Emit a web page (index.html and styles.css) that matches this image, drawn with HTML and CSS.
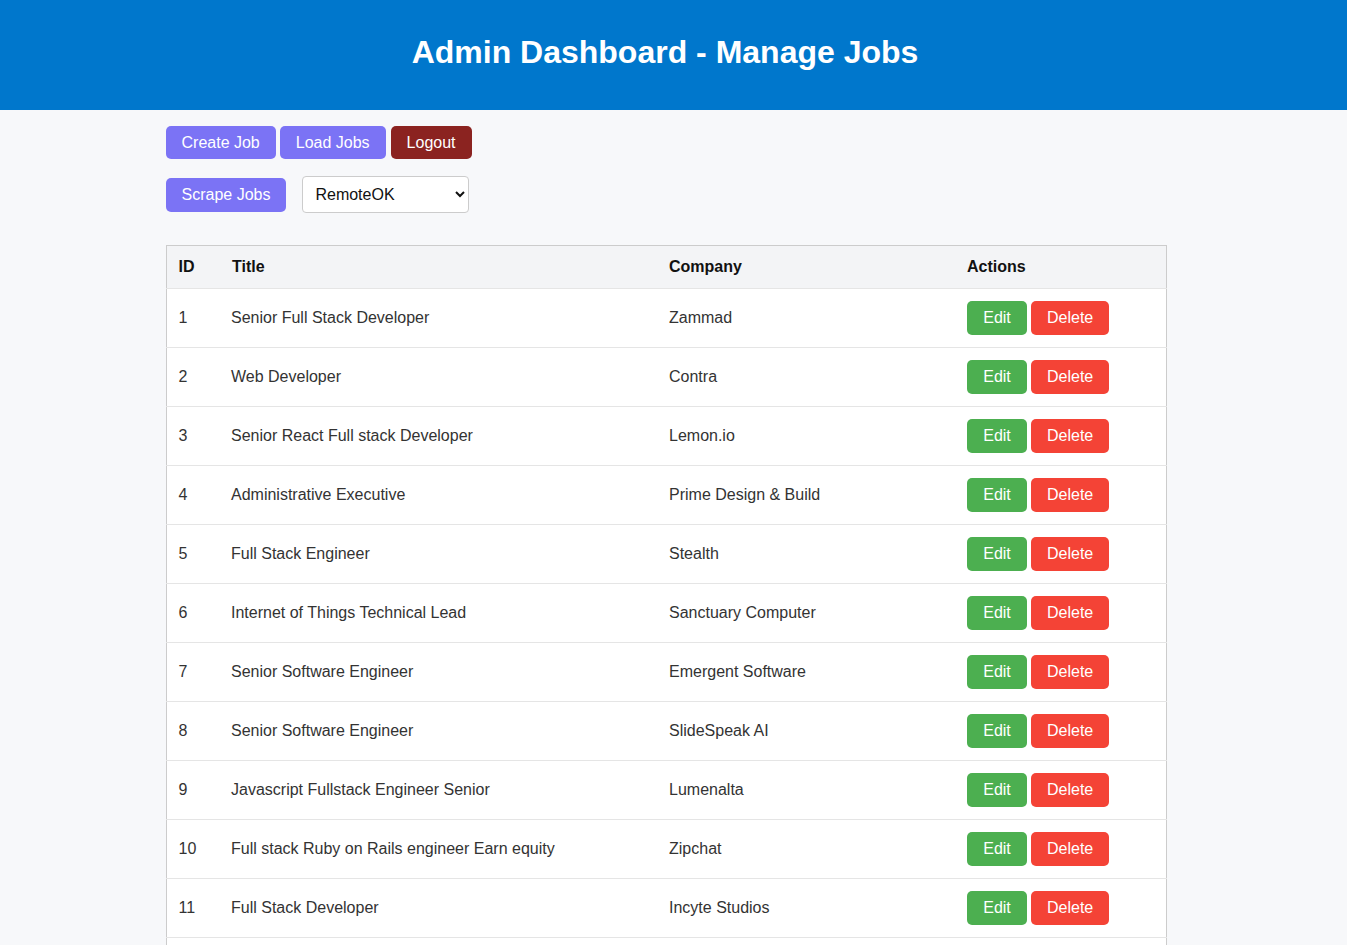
FILE: index.html
```html
<!DOCTYPE html>
<html>
<head>
<meta charset="utf-8">
<link rel="stylesheet" href="styles.css">
</head>
<body>
<header class="topbar"><h1 class="title">Admin Dashboard - Manage Jobs</h1></header>
<main class="container">
  <div class="toolbar">
    <button class="btn btn-purple">Create Job</button>
    <button class="btn btn-purple">Load Jobs</button>
    <button class="btn btn-logout">Logout</button>
  </div>
  <div class="scrape-row">
    <button class="btn btn-purple">Scrape Jobs</button>
    <select class="source">
      <option>RemoteOK</option>
    </select>
  </div>
  <table class="jobs">
    <colgroup>
      <col class="c-id"><col class="c-title"><col class="c-company"><col class="c-actions">
    </colgroup>
    <thead>
      <tr><th>ID</th><th>Title</th><th>Company</th><th>Actions</th></tr>
    </thead>
    <tbody>
      <tr><td>1</td><td>Senior Full Stack Developer</td><td>Zammad</td><td><button class="btn btn-edit">Edit</button><button class="btn btn-delete">Delete</button></td></tr>
      <tr><td>2</td><td>Web Developer</td><td>Contra</td><td><button class="btn btn-edit">Edit</button><button class="btn btn-delete">Delete</button></td></tr>
      <tr><td>3</td><td>Senior React Full stack Developer</td><td>Lemon.io</td><td><button class="btn btn-edit">Edit</button><button class="btn btn-delete">Delete</button></td></tr>
      <tr><td>4</td><td>Administrative Executive</td><td>Prime Design &amp; Build</td><td><button class="btn btn-edit">Edit</button><button class="btn btn-delete">Delete</button></td></tr>
      <tr><td>5</td><td>Full Stack Engineer</td><td>Stealth</td><td><button class="btn btn-edit">Edit</button><button class="btn btn-delete">Delete</button></td></tr>
      <tr><td>6</td><td>Internet of Things Technical Lead</td><td>Sanctuary Computer</td><td><button class="btn btn-edit">Edit</button><button class="btn btn-delete">Delete</button></td></tr>
      <tr><td>7</td><td>Senior Software Engineer</td><td>Emergent Software</td><td><button class="btn btn-edit">Edit</button><button class="btn btn-delete">Delete</button></td></tr>
      <tr><td>8</td><td>Senior Software Engineer</td><td>SlideSpeak AI</td><td><button class="btn btn-edit">Edit</button><button class="btn btn-delete">Delete</button></td></tr>
      <tr><td>9</td><td>Javascript Fullstack Engineer Senior</td><td>Lumenalta</td><td><button class="btn btn-edit">Edit</button><button class="btn btn-delete">Delete</button></td></tr>
      <tr><td>10</td><td>Full stack Ruby on Rails engineer Earn equity</td><td>Zipchat</td><td><button class="btn btn-edit">Edit</button><button class="btn btn-delete">Delete</button></td></tr>
      <tr><td>11</td><td>Full Stack Developer</td><td>Incyte Studios</td><td><button class="btn btn-edit">Edit</button><button class="btn btn-delete">Delete</button></td></tr>
      <tr><td>12</td><td>Senior Backend Engineer</td><td>Remote</td><td><button class="btn btn-edit">Edit</button><button class="btn btn-delete">Delete</button></td></tr>
    </tbody>
  </table>
</main>
</body>
</html>
```
FILE: styles.css
```css
* { box-sizing: border-box; }
html, body { margin: 0; padding: 0; }
body {
  font-family: "Liberation Sans", Arial, sans-serif;
  background: #f7f8fa;
  color: #333;
  font-size: 16px;
}
.topbar {
  background: #0077cc;
  height: 110px;
  padding: 34px 17px 0 0;
}
.title {
  margin: 0;
  color: #fff;
  font-size: 32px;
  line-height: 37px;
  text-align: center;
  font-weight: bold;
}
.container {
  width: 1000px;
  margin: 0 auto;
  padding-top: 16px;
  position: relative;
  left: -8px;
}
.toolbar {
  display: flex;
  gap: 4px;
}
.toolbar .btn { height: 33px; }
.btn-logout { margin-left: 1px; }
.scrape-row {
  display: flex;
  align-items: center;
  gap: 16px;
  margin-top: 17px;
}
.btn {
  font-family: "Liberation Sans", Arial, sans-serif;
  font-size: 16px;
  line-height: 18px;
  border: none;
  border-radius: 5px;
  color: #fff;
  padding: 7px 16px;
  height: 34px;
  cursor: pointer;
}
.btn-purple { background: #7b73f5; }
.btn-logout { background: #8b2320; }
.btn-edit { background: #4caf50; width: 60px; }
.btn-delete { background: #f44336; margin-left: 4px; width: 78px; }
.source {
  width: 167px;
  height: 37px;
  font-family: "Liberation Sans", Arial, sans-serif;
  font-size: 16px;
  color: #111;
  background: #fff;
  border: 1px solid #ccc;
  border-radius: 4px;
  padding: 0 8px;
}
.jobs {
  margin-top: 32px;
  width: 1000px;
  border-collapse: collapse;
  table-layout: fixed;
  background: #fff;
  border: 1px solid #ccc;
}
.c-id { width: 54px; }
.c-title { width: 437px; }
.c-company { width: 298px; }
.c-actions { width: 211px; }
.jobs th {
  background: #f3f4f6;
  color: #111;
  font-weight: bold;
  text-align: left;
  height: 43px;
  padding: 0 12px;
  border-bottom: 1px solid #e5e5e5;
}
.jobs td {
  padding: 11px 12px 12px;
  height: 59px;
  border-bottom: 1px solid #e5e5e5;
  color: #333;
  white-space: nowrap;
}
.jobs td:nth-child(2) { padding-left: 11px; }
```
